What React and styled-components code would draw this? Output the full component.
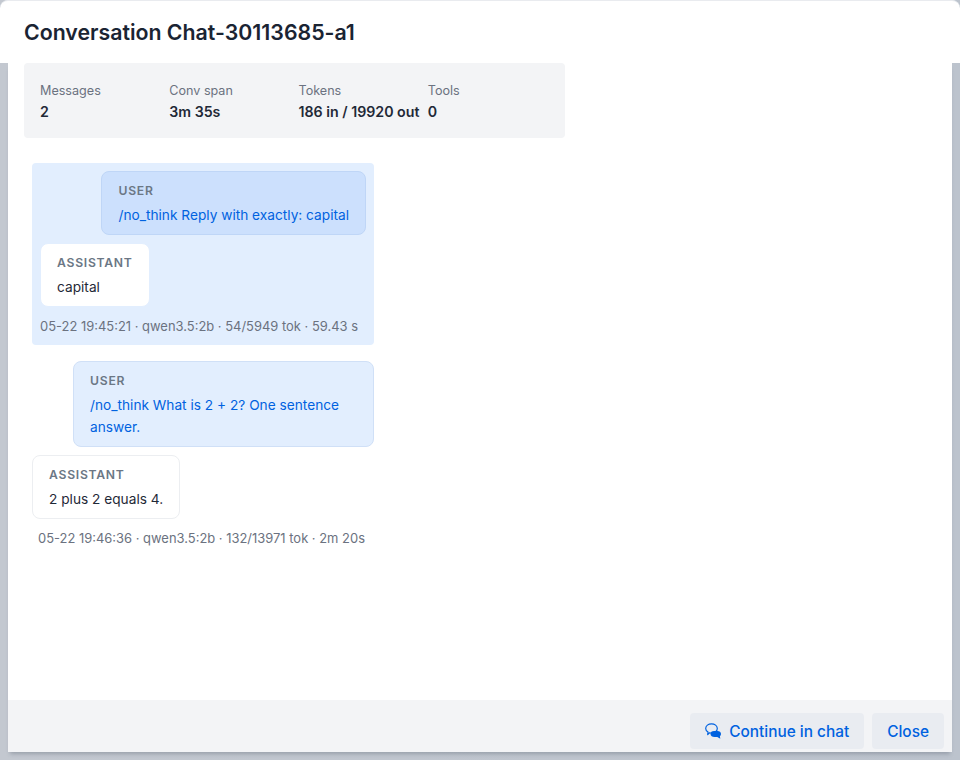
import React from 'react'
import styled, { createGlobalStyle } from 'styled-components'

const GlobalStyle = createGlobalStyle`
  html, body {
    margin: 0;
    padding: 0;
    background: #bcc3cd;
  }

  body {
    font-family: Inter, "Noto Sans", sans-serif;
    color: #1f2937;
  }
`

const Backdrop = styled.div`
  width: 960px;
  height: 760px;
  overflow: hidden;
  display: flex;
  flex-direction: column;
  background: linear-gradient(90deg, #c3c8d0 0, #bcc3cd 100%);
`

const Header = styled.header`
  height: 62px;
  flex: none;
  display: flex;
  align-items: center;
  padding: 0 24px;
  background: #fff;
  border-top: 1px solid #e9ebef;
  border-radius: 8px 8px 0 0;
`

const Title = styled.h1`
  margin: 0;
  font-size: 21.3px;
  line-height: 28px;
  font-weight: 600;
  color: #1a2433;
`

const Dialog = styled.div`
  height: 689px;
  margin: 0 8px;
  display: flex;
  flex-direction: column;
  box-shadow: 0 4px 4px -2px rgba(60, 70, 85, 0.3);
`

const Body = styled.main`
  flex: 1;
  background: #fff;
  padding: 0 16px;
`

const Stats = styled.section`
  width: 541px;
  box-sizing: border-box;
  display: grid;
  grid-template-columns: repeat(4, 1fr);
  column-gap: 8px;
  padding: 16px;
  background: #f3f4f6;
  border-radius: 4px;
`

const StatLabel = styled.div`
  font-size: 12.6px;
  line-height: 23px;
  color: #6b7280;
`

const StatValue = styled.div`
  font-size: 14.2px;
  line-height: 20px;
  font-weight: 600;
  color: #1f2937;
  white-space: nowrap;
`

const Thread = styled.div`
  width: 342px;
  margin: 25px 0 0 8px;
  display: flex;
  flex-direction: column;
  gap: 16px;
`

const Exchange = styled.article`
  display: flex;
  flex-direction: column;
  gap: 8px;
  padding: ${p => (p.$active ? '8px' : '0')};
  background: ${p => (p.$active ? '#e2eefe' : 'transparent')};
  border-radius: 4px;
`

const Bubble = styled.div`
  box-sizing: border-box;
  max-width: 88%;
  padding: 8px 16px;
  border-radius: 8px;
  border: 1px solid ${p => p.$border};
  background: ${p => p.$bg};
  align-self: ${p => (p.$user ? 'flex-end' : 'flex-start')};
`

const Role = styled.div`
  font-size: 12.2px;
  line-height: 21px;
  margin-bottom: 3px;
  font-weight: 600;
  letter-spacing: 0.06em;
  text-transform: uppercase;
  color: #6b7785;
`

const Text = styled.div`
  font-size: 13.7px;
  line-height: 22px;
  color: ${p => (p.$user ? '#0062e0' : '#1f2937')};
`

const Meta = styled.div`
  font-size: 12.95px;
  line-height: 22px;
  padding-left: ${p => p.$indent}px;
  color: #6b7280;
  white-space: nowrap;
`

const Footer = styled.footer`
  height: 52px;
  flex: none;
  box-sizing: border-box;
  display: flex;
  justify-content: flex-end;
  align-items: flex-start;
  gap: 8px;
  padding: 13px 8px 0 0;
  background: #f3f4f6;
`

const Button = styled.button`
  height: 36px;
  display: inline-flex;
  align-items: center;
  gap: 7px;
  padding: 0 15px;
  border: none;
  border-radius: 4px;
  background: #e9ecf1;
  color: #0062e0;
  font-family: inherit;
  font-size: 15.4px;
  font-weight: 500;
  cursor: pointer;
`

const ChatIcon = () => (
  <svg width='17' height='17' viewBox='0 0 17 17' aria-hidden='true'>
    <path
      d='M6.500.8c3.200 0 5.800 2 5.800 4.600S9.700 10 6.500 10c-.7 0-1.300-.1-1.900-.2L2.700 11.500l.3-2.500C1.600 8.100.7 6.800.7 5.400.7 2.800 3.300.8 6.500.8z'
      fill='none'
      stroke='currentColor'
      strokeWidth='1.200'
      strokeLinejoin='round'
    />
    <path
      d='M9 8h3.500c2 0 3.500 1.300 3.500 3 0 1-.4 1.800-1.100 2.300l.4 2.500-3-1.800H9.500c-2.200 0-4-.9-4-3s1.300-3 3.500-3z'
      fill='currentColor'
    />
  </svg>
)

const stats = [
  { label: 'Messages', value: '2' },
  { label: 'Conv span', value: '3m 35s' },
  { label: 'Tokens', value: '186 in / 19920 out' },
  { label: 'Tools', value: '0' }
]

const exchanges = [
  {
    active: true,
    user: '/no_think Reply with exactly: capital',
    assistant: 'capital',
    meta: '05-22 19:45:21 · qwen3.5:2b · 54/5949 tok · 59.43 s',
    indent: 0
  },
  {
    active: false,
    user: '/no_think What is 2 + 2? One sentence answer.',
    assistant: '2 plus 2 equals 4.',
    meta: '05-22 19:46:36 · qwen3.5:2b · 132/13971 tok · 2m 20s',
    indent: 6
  }
]

const App = () => (
  <Backdrop>
    <GlobalStyle />
    <Header>
      <Title>Conversation Chat-30113685-a1</Title>
    </Header>
    <Dialog>
      <Body>
        <Stats>
          {stats.map(stat => (
            <div key={stat.label}>
              <StatLabel>{stat.label}</StatLabel>
              <StatValue>{stat.value}</StatValue>
            </div>
          ))}
        </Stats>
        <Thread>
          {exchanges.map(item => (
            <Exchange key={item.meta} $active={item.active}>
              <Bubble
                $user
                $bg={item.active ? '#cce0fd' : '#e2eefe'}
                $border={item.active ? '#bfd6f7' : '#d0e0f7'}
              >
                <Role>User</Role>
                <Text $user>{item.user}</Text>
              </Bubble>
              <Bubble $bg='#fff' $border={item.active ? '#e2eefe' : '#eceef1'}>
                <Role>Assistant</Role>
                <Text>{item.assistant}</Text>
              </Bubble>
              <Meta $indent={item.indent}>{item.meta}</Meta>
            </Exchange>
          ))}
        </Thread>
      </Body>
      <Footer>
        <Button><ChatIcon />Continue in chat</Button>
        <Button>Close</Button>
      </Footer>
    </Dialog>
  </Backdrop>
)

export default App
